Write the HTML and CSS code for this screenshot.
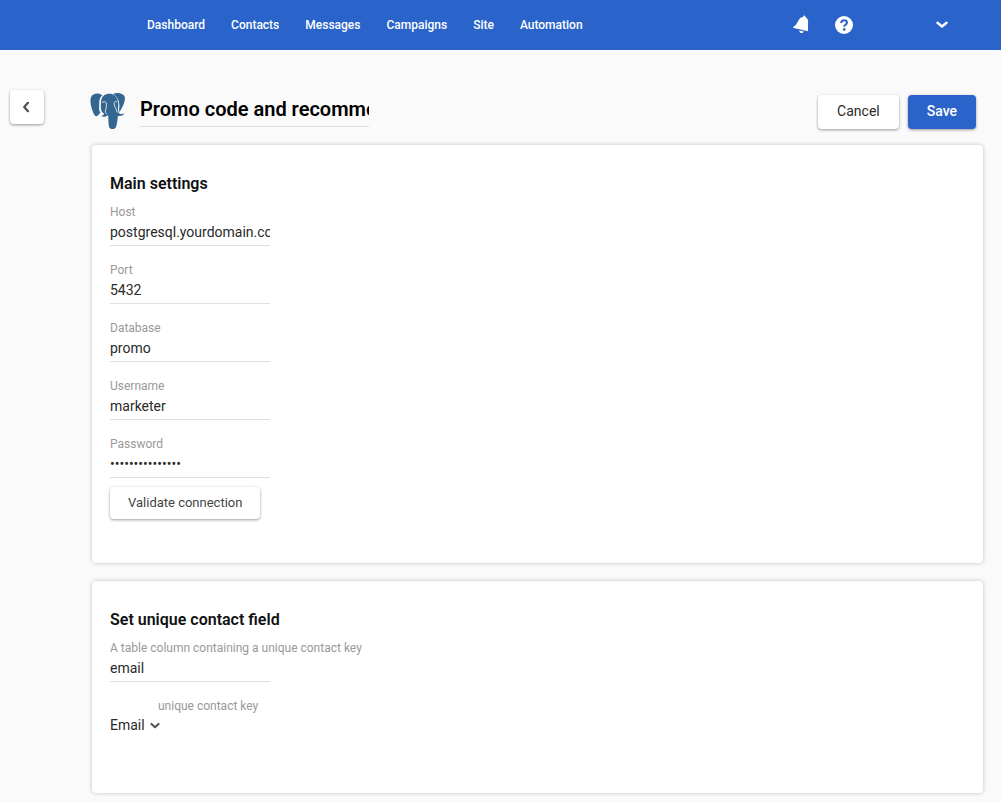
FILE: index.html
```html
<!DOCTYPE html>
<html lang="en">
<head>
<meta charset="utf-8">
<meta name="viewport" content="width=device-width, initial-scale=1">
<title>Data source</title>
<link rel="stylesheet" href="styles.css">
</head>
<body>
<header class="topbar">
  <nav class="nav">
    <a href="#">Dashboard</a>
    <a href="#">Contacts</a>
    <a href="#">Messages</a>
    <a href="#">Campaigns</a>
    <a href="#">Site</a>
    <a href="#">Automation</a>
  </nav>
  <div class="tools">
    <button class="tool" type="button" aria-label="Notifications">
      <svg width="18" height="20" viewBox="0 0 18 20"><g fill="#fff"><path d="M12.500.5c.8.2 1 .7.800 1.400 2 1 2.900 2.700 2.800 5l-.1 8c0 .9-.2 1.400-1 1.200L1.700 12.900c-.7-.2-.7-.8-.2-1.200 1.300-.8 2.300-1.500 3.100-2.900l2.300-4c1-1.800 2.400-2.800 4.300-2.900.2-.9.600-1.500 1.300-1.400z"/><path d="M7.300 15.400l4.400 1.100c-.5 1.200-1.500 1.700-2.600 1.400-1.200-.3-1.900-1.300-1.800-2.500z"/></g></svg>
    </button>
    <button class="tool tool-help" type="button" aria-label="Help">
      <svg width="18" height="18" viewBox="0 0 18 18"><circle cx="9" cy="9" r="9" fill="#fff"/><path d="M6.200 7C6.300 5.200 7.500 4.300 9.100 4.300c1.700 0 2.800.9 2.800 2.400 0 2.100-2.700 2-2.700 4.100" fill="none" stroke="#2a64cb" stroke-width="2.100"/><circle cx="9.200" cy="13.400" r="1.300" fill="#2a64cb"/></svg>
    </button>
    <button class="tool" type="button" aria-label="Account menu">
      <svg width="12" height="8" viewBox="0 0 12 8"><path d="M1.500 1.800L6 5.500l4.500-3.700" fill="none" stroke="#fff" stroke-width="2.400" stroke-linecap="round" stroke-linejoin="round"/></svg>
    </button>
  </div>
</header>

<div class="page">
  <button class="btn back" type="button" aria-label="Back">
    <svg width="8" height="12" viewBox="0 0 8 12"><path d="M6 1.800L2.200 6 6 10.200" fill="none" stroke="#505050" stroke-width="2.200" stroke-linecap="round" stroke-linejoin="round"/></svg>
  </button>
  <main class="content">
    <div class="heading">
      <svg class="logo" width="36" height="38" viewBox="0 0 36 38" aria-hidden="true">
        <g fill="#336791">
          <path d="M12.300 3.200C8.700.5 2.700 1 1 5.300c-1.500 4.200.3 10.500 2.300 15.500 1.300 3.500 3.200 4.600 5 2.300l2.200-2.600c-2-2.200-1.200-5.300-1.300-8.200-.1-3.500.3-6.700 3.100-9.100z"/>
          <path d="M23 1.900c4.500-2 10.100-.9 11.600 2.600 1.300 3.800-1.700 10.100-5 15.500-.8-1.500-.5-3.500-.3-5.300.4-5-1.400-9.700-6.300-12.800z"/>
          <path d="M13.700 3.500c2.800-2.200 8.300-2.300 11 .1 2.700 2.300 4 6 3.500 10.200-.3 2.600-.3 4.800.5 7 .8 1.600 3.500 1.300 5.700.8-.8 1.900-4.300 2.900-6.500 2.200-.4 3.500-.7 7.900-1.700 10.700-.9 3.200-6.300 3.600-7.200.2-.8-3.400-.4-7.800-.9-11.700-1.800 2-4.500 2-7 1.300 1.300-.7 2.700-1.400 3.100-2.500-3.100-1.600-3.500-4.700-3.300-8.600-.1-3.600.2-7.400 2.800-9.700z"/>
        </g>
        <g fill="none" stroke="#fafafa" stroke-width=".8"><path d="M11.800 10.500c1.500-1 3.800-1 4.500.3.600 2.600-.2 5.600-.9 8.200-.3 1.200.4 2.200 1.500 2.900"/><path d="M27.600 9.900c-1.600-.7-3.300-.3-3.500 1.200.1 3.800 2.300 5.700 3.200 9.400"/></g>
      </svg>
      <input class="title" type="text" aria-label="Name" value="Promo code and recommendations">
      <div class="actions">
        <button class="btn" type="button">Cancel</button>
        <button class="btn btn-primary" type="button">Save</button>
      </div>
    </div>

    <section class="card card-main">
      <h2>Main settings</h2>
      <div class="fields">
        <div class="field"><label for="host">Host</label><input id="host" type="text" value="postgresql.yourdomain.com"></div>
        <div class="field"><label for="port">Port</label><input id="port" type="text" value="5432"></div>
        <div class="field"><label for="database">Database</label><input id="database" type="text" value="promo"></div>
        <div class="field"><label for="username">Username</label><input id="username" type="text" value="marketer"></div>
        <div class="field"><label for="password">Password</label><input id="password" type="password" value="marketer1234567"></div>
      </div>
      <button class="btn btn-validate" type="button">Validate connection</button>
    </section>

    <section class="card card-contact">
      <h2>Set unique contact field</h2>
      <div class="fields">
        <div class="field"><label for="column">A table column containing a unique contact key</label><input id="column" type="text" value="email"></div>
        <div class="field">
          <label class="label-key" for="key">unique contact key</label>
          <div class="select">
            <select id="key"><option>Email</option></select>
            <svg width="10" height="8" viewBox="0 0 10 8"><path d="M1.500 2L5 5.200 8.500 2" fill="none" stroke="#555" stroke-width="2.200" stroke-linecap="round" stroke-linejoin="round"/></svg>
          </div>
        </div>
      </div>
    </section>
  </main>
</div>
</body>
</html>
```
FILE: styles.css
```css
* { box-sizing: border-box; }

body {
  margin: 0;
  background: #fafafa;
  color: #2a2a2a;
  font-family: Roboto, "Liberation Sans", sans-serif;
  font-size: 14px;
}

button, input, select { font: inherit; color: inherit; }
button { cursor: pointer; }
svg { display: block; }

.topbar {
  display: flex;
  align-items: center;
  justify-content: space-between;
  height: 50px;
  padding: 0 53px 1px 147px;
  background: #2a64cb;
  color: #fff;
}

.nav { display: flex; gap: 26px; }
.nav a {
  color: #fff;
  font-size: 12px;
  font-weight: 500;
  line-height: 16px;
  text-decoration: none;
}

.tools { display: flex; align-items: center; gap: 25px; }
.tool { padding: 0; border: 0; background: none; }
.tool-help { margin-right: 58px; }

.page {
  display: grid;
  grid-template-columns: 34px minmax(0, 1fr);
  column-gap: 48px;
  padding: 40px 18px 10px 10px;
}

.btn {
  height: 34px;
  padding: 0 19px 3px;
  border: 0;
  border-radius: 4px;
  background: #fff;
  box-shadow: 0 1px 3px rgba(0, 0, 0, .4);
}
.btn-primary {
  background: #2a64cb;
  color: #fff;
  font-weight: 500;
}

.back {
  display: flex;
  align-items: center;
  justify-content: center;
  padding: 0 2px 0 0;
}

.heading {
  display: flex;
  align-items: center;
  height: 42px;
  margin-bottom: 13px;
}
.logo { flex: none; margin: 0 14px 0 -2px; }
.title {
  width: 229px;
  height: 32px;
  padding: 0 0 3px;
  border: 0;
  border-bottom: 1px solid #e0e0e0;
  border-radius: 0;
  background: none;
  color: #000;
  font-size: 20px;
  font-weight: 600;
}
.actions { display: flex; gap: 9px; margin-left: auto; padding: 2px 7px 0 0; }

.card {
  padding: 27px 18px;
  border-radius: 4px;
  background: #fff;
  box-shadow: 0 0 4px rgba(0, 0, 0, .24);
}
.card + .card { margin-top: 18px; }
.card-main { padding-bottom: 44px; }
.card-contact { padding-bottom: 57px; }

h2 {
  margin: 0 0 8px;
  color: #111;
  font-size: 16px;
  font-weight: 600;
  line-height: 24px;
}

.fields { display: grid; gap: 16px; }
.field label {
  display: block;
  color: #999;
  font-size: 12px;
  line-height: 16px;
}
.field input {
  display: block;
  width: 160px;
  height: 26px;
  padding: 0 0 1px;
  border: 0;
  border-bottom: 1px solid #e0e0e0;
  border-radius: 0;
  background: none;
}
.field .label-key { padding-left: 48px; }

.btn-validate {
  height: 32px;
  margin-top: 9px;
  padding: 0 18px 2px;
  color: #444;
  font-size: 13px;
}

.select { position: relative; width: 50px; }
.select select {
  display: block;
  width: 100%;
  height: 22px;
  padding: 0;
  border: 0;
  background: none;
  appearance: none;
}
.select svg {
  position: absolute;
  right: 0;
  top: 8px;
  pointer-events: none;
}
```
